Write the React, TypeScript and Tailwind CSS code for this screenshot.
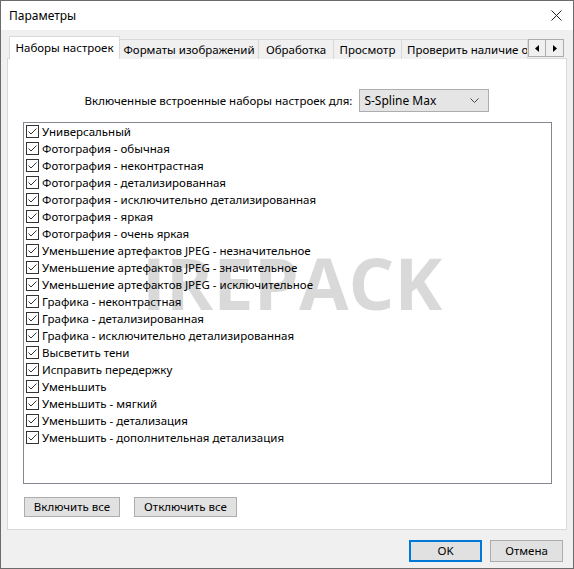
import React from 'react';

const presets = [
  'Универсальный',
  'Фотография - обычная',
  'Фотография - неконтрастная',
  'Фотография - детализированная',
  'Фотография - исключительно детализированная',
  'Фотография - яркая',
  'Фотография - очень яркая',
  'Уменьшение артефактов JPEG - незначительное',
  'Уменьшение артефактов JPEG - значительное',
  'Уменьшение артефактов JPEG - исключительное',
  'Графика - неконтрастная',
  'Графика - детализированная',
  'Графика - исключительно детализированная',
  'Высветить тени',
  'Исправить передержку',
  'Уменьшить',
  'Уменьшить - мягкий',
  'Уменьшить - детализация',
  'Уменьшить - дополнительная детализация',
];

const tabs = [
  { label: 'Форматы изображений', w: 'w-[139px]' },
  { label: 'Обработка', w: 'w-[75px]' },
  { label: 'Просмотр', w: 'w-[68px]' },
];

const CheckBox: React.FC = () => (
  <span className="w-[13px] h-[13px] border border-[#333333] bg-white flex items-center justify-center shrink-0">
    <svg width="11" height="11" viewBox="0 0 11 11">
      <path d="M1.5 5.5 L4 8 L9.5 2.5" fill="none" stroke="#333333" strokeWidth="1" />
    </svg>
  </span>
);

const App: React.FC = () => {
  return (
    <div
      className="w-[574px] h-[569px] bg-[#f0f0f0] border border-[#6b6b6b] flex flex-col text-[11.5px] text-black overflow-hidden"
      style={{ fontFamily: '"Noto Sans", "Liberation Sans", sans-serif' }}
    >
      {/* Title bar */}
      <div className="h-[29px] bg-white flex items-center justify-between pl-[8px] pr-[11px] shrink-0 text-[12px]">
        <span>Параметры</span>
        <svg width="11" height="11" viewBox="0 0 11 11">
          <path d="M0.5 0.5 L10.5 10.5 M10.5 0.5 L0.5 10.5" stroke="#222" strokeWidth="1" />
        </svg>
      </div>

      <div className="flex flex-col px-[6px] pt-[6px]">
        {/* Tabs */}
        <div className="flex items-end h-[23px] relative z-10 whitespace-nowrap">
          <div className="h-[23px] flex items-center bg-white border border-b-0 border-[#d9d9d9] ml-[2px] w-[111px] justify-center">
            Наборы настроек
          </div>
          {tabs.map(t => (
            <div
              key={t.label}
              className={`h-[20px] ${t.w} flex items-center justify-center bg-[#f0f0f0] border border-l-0 border-b-0 border-[#d9d9d9]`}
            >
              {t.label}
            </div>
          ))}
          <div className="h-[20px] pl-[5px] w-[126px] flex items-center bg-[#f0f0f0] border border-l-0 border-b-0 border-[#d9d9d9] overflow-hidden">
            Проверить наличие о
          </div>
          <div className="flex self-start mt-[3px] h-[18px]">
            <div className="w-[18px] h-[18px] border border-[#adadad] bg-[#f0f0f0] flex items-center justify-center">
              <svg width="4" height="7" viewBox="0 0 4 7"><path d="M4 0 L0 3.5 L4 7 Z" fill="#000" /></svg>
            </div>
            <div className="w-[18px] h-[18px] border border-l-0 border-[#adadad] bg-[#f0f0f0] flex items-center justify-center">
              <svg width="4" height="7" viewBox="0 0 4 7"><path d="M0 0 L4 3.5 L0 7 Z" fill="#000" /></svg>
            </div>
          </div>
        </div>

        {/* Tab panel */}
        <div className="w-[560px] h-[472px] bg-white border border-[#d9d9d9] -mt-px flex flex-col">
          <div className="flex justify-center items-center gap-[7px] mt-[30px]">
            <span>Включенные встроенные наборы настроек для:</span>
            <div className="w-[130px] h-[23px] bg-[#e5e5e5] border border-[#adadad] flex items-center justify-between pl-[4px] pr-[9px] text-[12px]">
              <span>S-Spline Max</span>
              <svg width="9" height="5" viewBox="0 0 9 5">
                <path d="M0.5 0.5 L4.5 4.5 L8.5 0.5" fill="none" stroke="#444" strokeWidth="1" />
              </svg>
            </div>
          </div>

          {/* Preset list */}
          <div className="relative ml-[15px] mt-[10px] w-[529px] h-[362px] border border-[#828790] bg-white">
            <div
              className="absolute left-[118px] top-[123px] text-[72px] font-bold leading-none text-black/15 pointer-events-none select-none"
              style={{ fontFamily: '"Open Sans", "Liberation Sans", sans-serif' }}
            >
              IREPACK
            </div>
            <div className="relative flex flex-col pl-[2px]">
              {presets.map(p => (
                <div key={p} className="h-[17px] flex items-center gap-[3px] whitespace-nowrap">
                  <CheckBox />
                  <span className="leading-none">{p}</span>
                </div>
              ))}
            </div>
          </div>

          <div className="flex gap-[14px] ml-[16px] mt-[13px]">
            <button className="w-[96px] h-[20px] bg-[#e1e1e1] border border-[#adadad] flex items-center justify-center">
              Включить все
            </button>
            <button className="w-[103px] h-[20px] bg-[#e1e1e1] border border-[#adadad] flex items-center justify-center">
              Отключить все
            </button>
          </div>
        </div>
      </div>

      {/* Dialog buttons */}
      <div className="flex justify-end gap-[8px] pr-[10px] mt-[10px]">
        <button className="w-[73px] h-[22px] bg-[#e1e1e1] border-2 border-[#0078d7] flex items-center justify-center">
          OK
        </button>
        <button className="w-[73px] h-[22px] bg-[#e1e1e1] border border-[#adadad] flex items-center justify-center">
          Отмена
        </button>
      </div>
    </div>
  );
};

export default App;
